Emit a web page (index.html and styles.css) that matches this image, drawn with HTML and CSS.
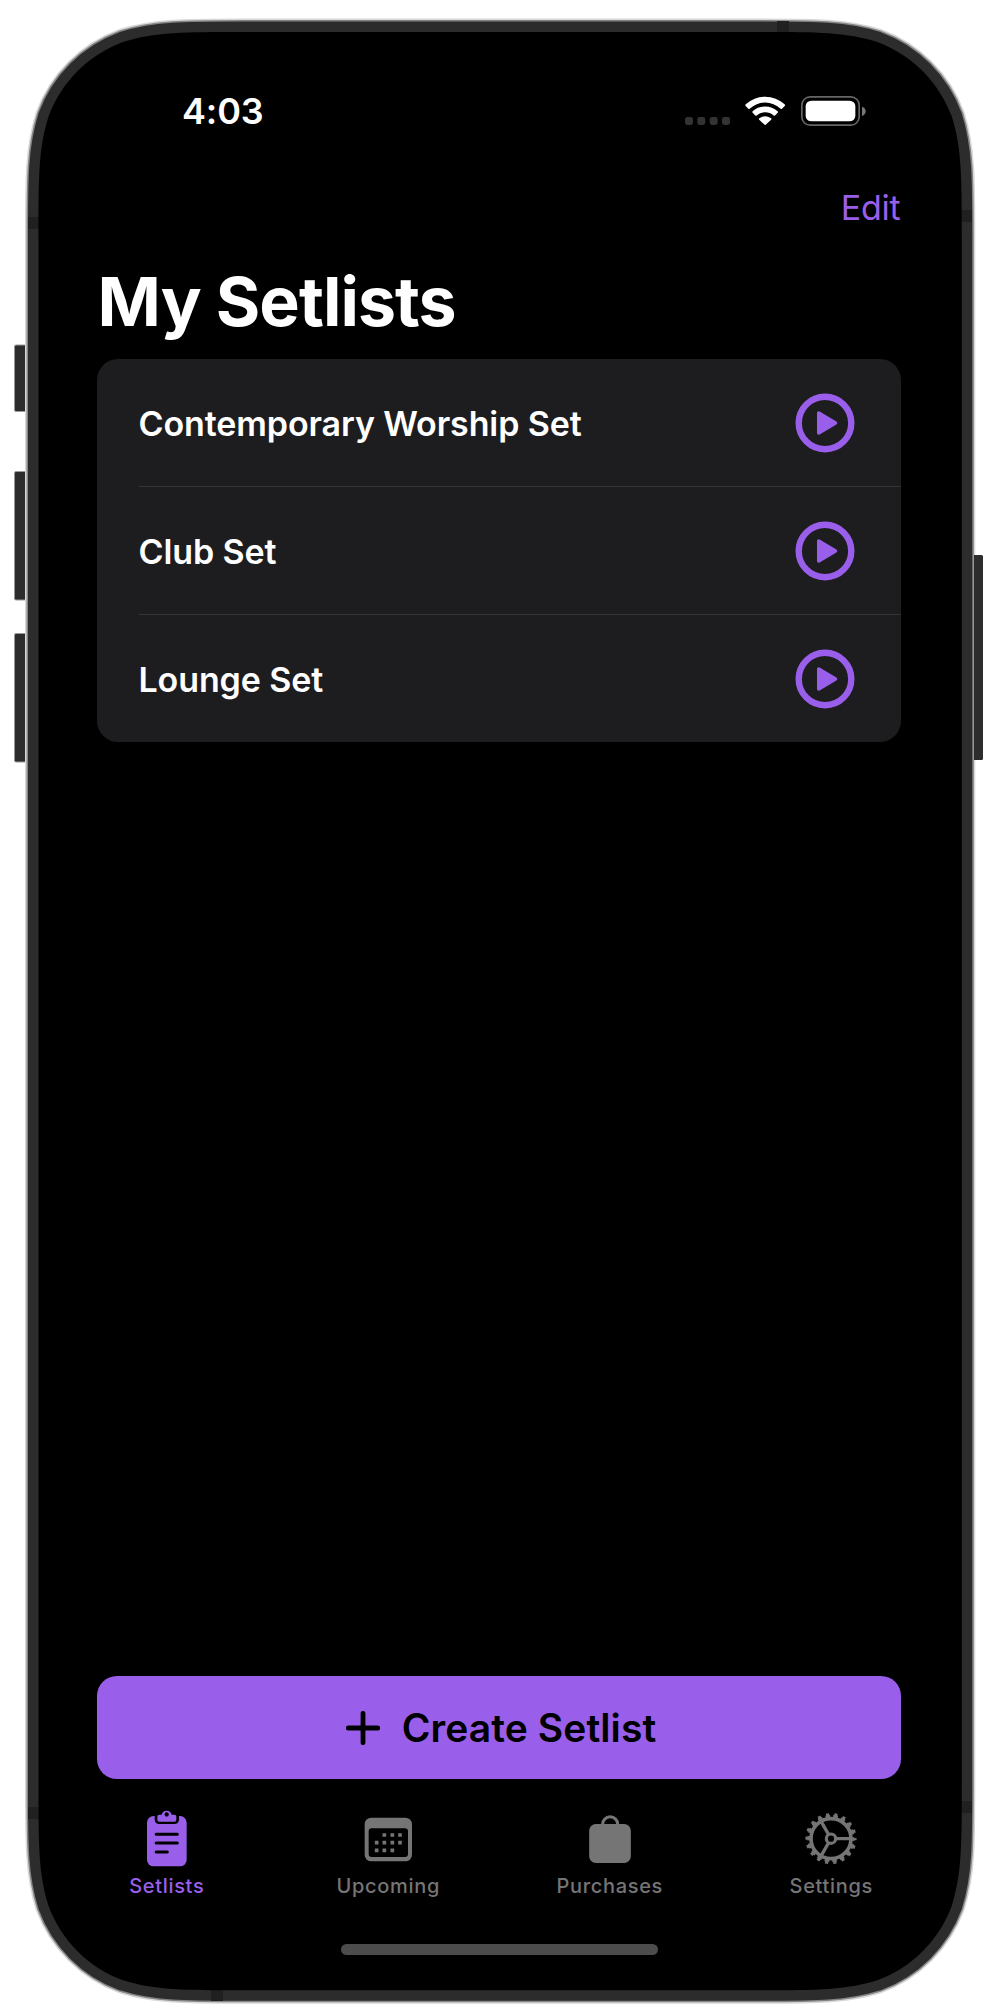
FILE: index.html
```
<!DOCTYPE html>
<html lang="en">
<head>
<meta charset="utf-8">
<title>My Setlists</title>
<link rel="stylesheet" href="styles.css">
</head>
<body>
<div class="phone">
  <svg class="device" viewBox="0 0 998 2008" aria-hidden="true">
    <defs>
      <path id="shell" d="M38.5 236.8c0-58.9 0-88.4 10-120.2c12.7-34.6 40-61.9 74.6-74.6c31.8-10 61.3-10 120.2-10H757c58.9 0 88.4 0 120.2 10c34.6 12.7 61.9 40 74.6 74.6c10 31.8 10 61.3 10 120.2V1785.5c0 58.9 0 88.4-10 120.2c-12.7 34.6-40 61.9-74.6 74.6c-31.8 10-61.3 10-120.2 10H243.3c-58.9 0-88.4 0-120.2-10c-34.6-12.7-61.9-40-74.6-74.6c-10-31.8-10-61.3-10-120.2Z"/>
    </defs>
    <g class="keys">
      <rect x="14.5" y="345" width="14" height="66.5" rx="1.5"/>
      <rect x="14.5" y="471.5" width="14" height="128.5" rx="1.5"/>
      <rect x="14.5" y="633.5" width="14" height="128.5" rx="1.5"/>
    </g>
    <use href="#shell" class="edge-light"/>
    <use href="#shell" class="edge-mid"/>
    <use href="#shell" class="edge-dark"/>
    <path class="key-right" d="M974 555H981.500Q983 555 983 556.500V758.500Q983 760 981.500 760H974Z"/>
    <path class="bands" d="M28 217h11v12h-11zM777 21h12v12h-12zM961 210h11v12h-11zM28 1807h11v12h-11zM961 1801h11v12h-11zM211 1990h12v11h-12z"/>
    <use href="#shell" class="glass"/>
  </svg>

  <main class="screen">
    <header class="status">
      <span class="time">4:03</span>
      <span class="indicators">
        <svg class="cell" viewBox="0 0 45 8"><g fill="#333"><rect width="8" height="8" rx="2.4"/><rect x="12.3" width="8" height="8" rx="2.4"/><rect x="24.7" width="8" height="8" rx="2.4"/><rect x="37" width="8" height="8" rx="2.4"/></g></svg>
        <svg class="wifi" viewBox="231 286 120 90"><g fill="#fff"><path d="M233 311A86 86 0 0 1 350 311Q352 313.500 350 316L342 324Q340 325.500 338 324A68 68 0 0 0 245 324Q243 325.500 241 324L233 316Q231 313.500 233 311Z"/><path d="M254 332A56 56 0 0 1 329 332Q331 334 329 336.500L321 344.500Q319 346 317 344.500A38 38 0 0 0 266 344.500Q264 346 262 344.500L254 336.500Q252 334 254 332Z"/><path d="M274 353A29 29 0 0 1 309 353Q311.500 355 309.500 357L293 372.500Q291.500 374 290 372.500L273.500 357Q271.500 355 274 353Z"/></g></svg>
        <svg class="battery" viewBox="397 286 195 90"><rect x="399.500" y="288.500" width="172" height="85" rx="25" fill="none" stroke="#666" stroke-width="5"/><rect x="411" y="300" width="149" height="62" rx="17" fill="#fff"/><path d="M580 318Q591 322 591 332T580 346Z" fill="#777"/></svg>
      </span>
    </header>

    <nav class="navbar"><a class="edit">Edit</a></nav>
    <h1 class="title">My Setlists</h1>

    <ul class="list">
      <li class="row"><span class="name">Contemporary Worship Set</span>
        <svg class="play" viewBox="0 0 60 60"><circle cx="30" cy="30" r="26.300"/><path d="M23.750 20V40L40.500 30Z"/></svg></li>
      <li class="row"><span class="name">Club Set</span>
        <svg class="play" viewBox="0 0 60 60"><circle cx="30" cy="30" r="26.300"/><path d="M23.750 20V40L40.500 30Z"/></svg></li>
      <li class="row"><span class="name">Lounge Set</span>
        <svg class="play" viewBox="0 0 60 60"><circle cx="30" cy="30" r="26.300"/><path d="M23.750 20V40L40.500 30Z"/></svg></li>
    </ul>

    <button class="create">
      <svg class="plus" viewBox="0 0 34 34"><path d="M17 2.300V31.700M2.300 17H31.700"/></svg>
      <span>Create Setlist</span>
    </button>

    <nav class="tabs">
      <a class="tab active">
        <svg class="icon" viewBox="110 50 180 180"><rect x="140" y="77" width="119" height="151" rx="20" fill="currentColor"/><path d="M163 70V87Q163 101 177 101H222Q236 101 236 87V70Z" fill="#000"/><path fill="currentColor" fill-rule="evenodd" d="M176 73H184A15.500 15.500 0 0 1 214 73H222Q228 73 228 79V88Q228 94 222 94H177Q171 94 171 88V79Q171 73 176 73ZM199 66A6.500 6.500 0 1 0 199 79A6.500 6.500 0 1 0 199 66Z"/><path d="M167.500 132H231M167.500 158H231M167.500 185H201" stroke="#000" stroke-width="9" stroke-linecap="round"/></svg>
        <span>Setlists</span>
      </a>
      <a class="tab">
        <svg class="icon" viewBox="775 50 180 180"><rect x="795" y="82" width="142" height="131" rx="20" fill="currentColor"/><rect x="807" y="114" width="118" height="86" rx="9" fill="#000"/><path fill="currentColor" d="M848.500 128.500h11v11h-11zM872.500 128.500h11v11h-11zM895.500 128.500h11v11h-11zM825.500 151.500h11v11h-11zM848.500 151.500h11v11h-11zM872.500 151.500h11v11h-11zM895.500 151.500h11v11h-11zM825.500 174.500h11v11h-11zM848.500 174.500h11v11h-11zM872.500 174.500h11v11h-11z"/></svg>
        <span>Upcoming</span>
      </a>
      <a class="tab">
        <svg class="icon" viewBox="149.500 50 180 180"><rect x="177" y="101" width="125" height="117" rx="20" fill="currentColor"/><path d="M217 103A23 23.500 0 0 1 263 103" fill="none" stroke="currentColor" stroke-width="9"/></svg>
        <span>Purchases</span>
      </a>
      <a class="tab">
        <svg class="icon" viewBox="813 50 180 180"><g fill="none" stroke="currentColor"><circle cx="903" cy="145" r="60" stroke-width="11"/><circle cx="903" cy="145" r="67" stroke-width="8" stroke-dasharray="14 9.387" stroke-dashoffset="7"/><circle cx="903" cy="145" r="73" stroke-width="7.500" stroke-dasharray="9.500 15.982" stroke-dashoffset="4.750"/><circle cx="903" cy="145" r="14" stroke-width="9.500"/><path d="M918 145H960M895.500 132L874.500 95.600M895.500 158L874.500 194.400" stroke-width="10"/></g></svg>
        <span>Settings</span>
      </a>
    </nav>
    <div class="home"></div>
  </main>
</div>
</body>
</html>
```
FILE: styles.css
```
* { box-sizing: border-box; }

body {
  margin: 0;
  background: #fff;
  font-family: Inter, "Liberation Sans", sans-serif;
}

.phone {
  position: relative;
  width: 998px;
  height: 2008px;
  overflow: hidden;
}

.device {
  position: absolute;
  inset: 0;
  width: 998px;
  height: 2008px;
}

.keys { fill: #2c2c2c; stroke: #999; stroke-width: 1; }
.key-right { fill: #2c2c2c; }
.edge-light { fill: none; stroke: #d8d8d8; stroke-width: 27; }
.edge-mid { fill: none; stroke: #858585; stroke-width: 24; }
.edge-dark { fill: #2c2c2c; stroke: #2c2c2c; stroke-width: 21; }
.bands { fill: #202020; }
.glass { fill: #000; }

.screen {
  position: relative;
  display: flex;
  flex-direction: column;
  height: 2008px;
  padding: 85px 97.500px 0 97px;
}

.status {
  display: flex;
  justify-content: space-between;
  height: 52px;
  padding: 0 35px 0 85px;
  color: #fff;
}

.time {
  font-size: 36px;
  font-weight: 600;
  letter-spacing: -0.150px;
  line-height: 52px;
}

.indicators { display: flex; align-items: flex-start; padding-top: 10.500px; }
.cell { width: 45px; height: 8px; margin-top: 21px; }
.wifi { width: 40px; height: 30px; margin-left: 15px; }
.battery { width: 65px; height: 30px; margin-left: 15.600px; }

.navbar {
  display: flex;
  justify-content: flex-end;
  align-items: center;
  height: 80px;
  margin-top: 31px;
}

.edit {
  color: #9a5fea;
  font-size: 34px;
  letter-spacing: -0.200px;
  line-height: 40px;
}

.title {
  margin: 13px 0 0 0.600px;
  height: 80px;
  color: #fff;
  font-size: 68px;
  font-weight: 700;
  letter-spacing: -0.960px;
  line-height: 80px;
  white-space: nowrap;
}

.list {
  margin: 18px 0 0;
  padding: 0;
  height: 383px;
  flex: none;
  border-radius: 21px;
  background: #1d1d1f;
  list-style: none;
}

.row {
  display: flex;
  align-items: center;
  justify-content: space-between;
  height: 128px;
  margin-left: 41.500px;
  padding-right: 45.500px;
}

.row:first-child { height: 127px; }
.row + .row { box-shadow: inset 0 1px #343436; }

.name {
  color: #fff;
  font-size: 34px;
  font-weight: 600;
  letter-spacing: -0.110px;
  line-height: 44px;
  padding-top: 3px;
  white-space: nowrap;
}

.play { width: 60px; height: 60px; margin-top: 1px; }
.play circle { fill: none; stroke: #9a5fea; stroke-width: 6.400; }
.play path { fill: #9a5fea; stroke: #9a5fea; stroke-width: 3.500; stroke-linejoin: round; }

.create {
  display: flex;
  align-items: center;
  justify-content: center;
  gap: 21.500px;
  flex: none;
  height: 103px;
  margin: 934px 0 0;
  padding: 0 0 0 5px;
  border: 0;
  border-radius: 20px;
  background: #9a5fea;
  color: #000;
  font-family: inherit;
  font-size: 39px;
  font-weight: 600;
  letter-spacing: 0.080px;
  white-space: nowrap;
}

.plus { width: 34px; height: 34px; }
.plus path { stroke: #000; stroke-width: 4.800; stroke-linecap: round; }

.tabs {
  display: grid;
  grid-template-columns: repeat(4, 221.500px);
  margin: 27.500px -42px 0 -41px;
}

.tab {
  display: flex;
  flex-direction: column;
  align-items: center;
  color: #757575;
  font-size: 20px;
  font-weight: 500;
  line-height: 24px;
  letter-spacing: 0.680px;
}

.tab.active { color: #9a5fea; }
.icon { width: 60px; height: 60px; margin-bottom: 7px; }

.home {
  align-self: center;
  flex: none;
  width: 317px;
  height: 10.500px;
  margin: 46.500px 0 0 1px;
  border-radius: 6px;
  background: #4c4c4c;
}
```
